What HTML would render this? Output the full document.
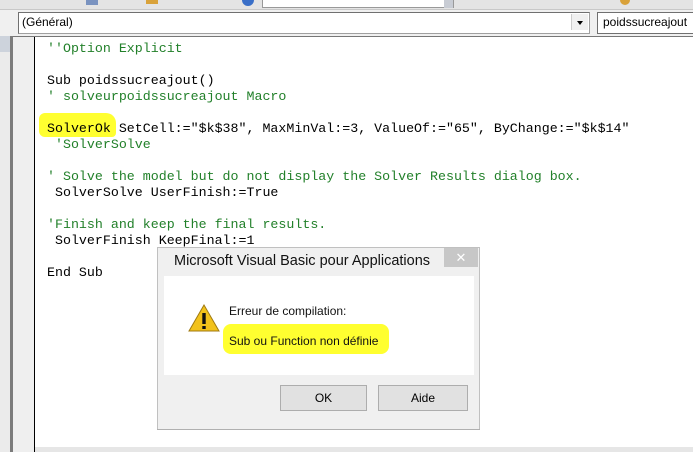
<!DOCTYPE html>
<html><head><style>
body{margin:0;width:693px;height:452px;overflow:hidden;background:#f0f0f0;position:relative;font-family:"Liberation Sans",sans-serif}
.a{position:absolute}
.code{font-family:"Liberation Mono",monospace;font-size:13.3px;white-space:pre;line-height:16px;color:#000}
.g{color:#22802a}
</style></head><body>
<div class="a" style="left:0;top:0;width:693px;height:9px;background:#e4e4e4;border-bottom:1px solid #c8c8c8"></div>
<div class="a" style="left:262px;top:0;width:190px;height:7px;background:#fff;border:1px solid #999;border-top:none"></div>
<div class="a" style="left:444px;top:0;width:9px;height:8px;background:#c8ccd4"></div>
<div class="a" style="left:86px;top:0;width:12px;height:5px;background:#7a93c0"></div>
<div class="a" style="left:242px;top:0;width:12px;height:6px;background:#3a6fc8;border-radius:0 0 6px 6px"></div>
<div class="a" style="left:146px;top:0;width:12px;height:4px;background:#d9a23a"></div>
<div class="a" style="left:620px;top:0;width:10px;height:5px;background:#d9a23a;border-radius:0 0 5px 5px"></div>
<div class="a" style="left:18px;top:12px;width:570px;height:20px;background:#fff;border:1px solid #a0a0a0;border-top-color:#707070;border-left-color:#707070"></div>
<div class="a" style="left:22px;top:15px;font-size:12px">(Général)</div>
<div class="a" style="left:571px;top:14px;width:16px;height:16px;background:#f0f0f0;border-left:1px solid #ccc"><div class="a" style="left:5px;top:7px;border:3px solid transparent;border-top:4px solid #000"></div></div>
<div class="a" style="left:597px;top:12px;width:100px;height:20px;background:#fff;border:1px solid #707070"></div>
<div class="a" style="left:603px;top:15px;font-size:12px">poidssucreajout</div>
<div class="a" style="left:0;top:36px;width:10px;height:416px;background:#ebebeb"></div>
<div class="a" style="left:0;top:36px;width:10px;height:16px;background:#cdd3dc"></div>
<div class="a" style="left:10px;top:36px;width:3px;height:416px;background:#7c7c7c"></div>
<div class="a" style="left:13px;top:36px;width:21px;height:416px;background:#efefef"></div>
<div class="a" style="left:34px;top:36px;width:1px;height:416px;background:#000"></div>
<div class="a" style="left:13px;top:36px;width:680px;height:1px;background:#777"></div>
<div class="a" style="left:35px;top:37px;width:658px;height:415px;background:#fff"></div>
<div class="a" style="left:35px;top:447px;width:658px;height:5px;background:#e6e6e6"></div>
<div class="a" style="left:39px;top:113px;width:77px;height:24px;background:#ffff30;border-radius:6px 10px 4px 6px"></div>
<div class="a code" style="left:47px;top:41px"><span class="g">''Option Explicit</span>

Sub poidssucreajout()
<span class="g">' solveurpoidssucreajout Macro</span>

SolverOk SetCell:="$k$38", MaxMinVal:=3, ValueOf:="65", ByChange:="$k$14"
 <span class="g">'SolverSolve</span>

<span class="g">' Solve the model but do not display the Solver Results dialog box.</span>
 SolverSolve UserFinish:=True

<span class="g">'Finish and keep the final results.</span>
 SolverFinish KeepFinal:=1

End Sub</div>
<div class="a" style="left:157px;top:247px;width:323px;height:183px;background:#f0f0f0;border:1px solid #c0c0c0;box-sizing:border-box"></div>
<div class="a" style="left:174px;top:253px;font-size:14.5px;color:#111">Microsoft Visual Basic pour Applications</div>
<div class="a" style="left:444px;top:248px;width:34px;height:19px;background:#c7c7c7;color:#fff;font-size:13px;text-align:center;line-height:19px">✕</div>
<div class="a" style="left:164px;top:276px;width:310px;height:99px;background:#fff"></div>
<svg class="a" style="left:188px;top:304px" width="32" height="28" viewBox="0 0 32 28"><path d="M16 1 L31 27 L1 27 Z" fill="#f2c21b" stroke="#a07a10" stroke-width="1"/><rect x="14.3" y="9" width="3.4" height="11" fill="#111"/><rect x="14.3" y="22" width="3.4" height="3" fill="#111"/></svg>
<div class="a" style="left:229px;top:304px;font-size:12px;color:#111">Erreur de compilation:</div>
<div class="a" style="left:223px;top:324px;width:166px;height:30px;background:#ffff30;border-radius:8px"></div>
<div class="a" style="left:229px;top:334px;font-size:12px;color:#111">Sub ou Function non définie</div>
<div class="a" style="left:280px;top:385px;width:87px;height:26px;background:#e1e1e1;border:1px solid #adadad;box-sizing:border-box;text-align:center;line-height:24px;font-size:12px">OK</div>
<div class="a" style="left:378px;top:385px;width:90px;height:26px;background:#e1e1e1;border:1px solid #adadad;box-sizing:border-box;text-align:center;line-height:24px;font-size:12px">Aide</div>
<div class="a" style="left:157px;top:429px;width:323px;height:1px;background:#b0b0b0"></div>
</body></html>
